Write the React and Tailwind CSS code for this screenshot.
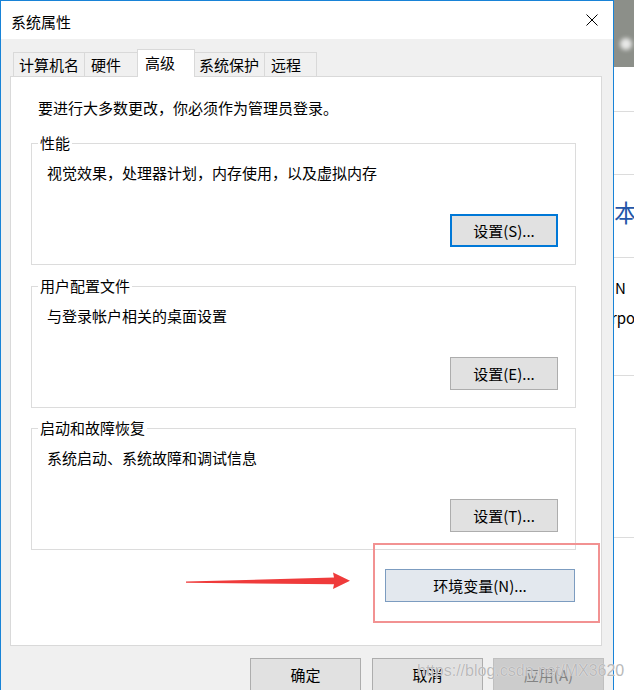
import { useState } from "react";

const groups = [
  {
    title: "性能",
    desc: "视觉效果，处理器计划，内存使用，以及虚拟内存",
    btn: "设置(S)...",
    focus: true,
  },
  { title: "用户配置文件", desc: "与登录帐户相关的桌面设置", btn: "设置(E)..." },
  { title: "启动和故障恢复", desc: "系统启动、系统故障和调试信息", btn: "设置(T)..." },
];

const tabs = [
  { label: "计算机名", w: "w-[72px]", pl: "pl-[5px]" },
  { label: "硬件", w: "w-[54px]", pl: "pl-[6px]" },
  { label: "高级", w: "w-[58px]", pl: "pl-[7px]" },
  { label: "系统保护", w: "w-[71px]", pl: "pl-[4px]" },
  { label: "远程", w: "w-[53px]", pl: "pl-[6px]" },
];

const GroupBox = ({ title, desc, btn, focus, className = "" }) => (
  <fieldset
    className={`w-[545px] ml-[20px] px-[6px] pb-[17px] border border-[#dcdcdc] ${className}`}
  >
    <legend className="px-[2px] leading-[20px]">{title}</legend>
    <p className="mt-[10px] pl-[9px] leading-[20px]">{desc}</p>
    <div className="flex justify-end mt-[31px] pr-[11px]">
      <div
        className={`w-[108px] h-[33px] flex items-center justify-center bg-[#e1e1e1] ${
          focus ? "border-2 border-[#0078d7]" : "border border-[#adadad]"
        }`}
      >
        {btn}
      </div>
    </div>
  </fieldset>
);

const App = () => {
  const [tab] = useState("高级");

  return (
    <div className="relative flex w-[634px] h-[690px] overflow-hidden bg-white text-black text-[15px] leading-[20px] font-['Noto_Sans_CJK_SC',sans-serif]">
      {/* dialog window */}
      <div className="w-[614px] shrink-0 flex flex-col border-x border-t border-[#1883d7] bg-[#f0f0f0]">
        <div className="h-[38px] shrink-0 flex items-center justify-between bg-white">
          <span className="pl-[10px] mt-[3px]">系统属性</span>
          <svg width="12" height="12" viewBox="0 0 12 12" className="mr-[15px]">
            <path d="M0.5 0.5 L11.5 11.5 M11.5 0.5 L0.5 11.5" stroke="#000" strokeWidth="1" />
          </svg>
        </div>

        {/* tabs */}
        <div className="flex items-end h-[27px] mt-[10px] pl-[12px]">
          {tabs.map((t, i) => {
            const active = t.label === tab;
            return (
              <div
                key={t.label}
                className={`${t.w} ${t.pl} flex items-center border border-b-0 border-[#d9d9d9] ${
                  i > 0 ? "-ml-px" : ""
                } ${
                  active
                    ? "h-[28px] -mb-px relative z-10 bg-white pb-[2px]"
                    : "h-[24px] bg-[#f0f0f0]"
                }`}
              >
                {t.label}
              </div>
            );
          })}
        </div>

        {/* panel */}
        <div className="w-[592px] h-[570px] shrink-0 ml-[9px] border border-[#d9d9d9] bg-white flex flex-col">
          <p className="pt-[21px] pl-[27px] leading-[20px]">
            要进行大多数更改，你必须作为管理员登录。
          </p>
          <GroupBox {...groups[0]} className="mt-[15px]" />
          <GroupBox {...groups[1]} className="mt-[11px]" />
          <GroupBox {...groups[2]} className="mt-[10px]" />
          <div className="flex justify-end mt-[19px] pr-[26px]">
            <div className="w-[190px] h-[33px] flex items-center justify-center bg-[#e3e8ee] border border-[#7c9cc0]">
              环境变量(N)...
            </div>
          </div>
        </div>

        {/* footer buttons */}
        <div className="flex justify-end gap-[11px] mt-[12px] pr-[9px]">
          <div className="w-[111px] h-[34px] flex items-center justify-center bg-[#e1e1e1] border border-[#adadad]">
            确定
          </div>
          <div className="w-[111px] h-[34px] flex items-center justify-center bg-[#e1e1e1] border border-[#adadad]">
            取消
          </div>
          <div className="w-[111px] h-[34px] -ml-px flex items-center justify-center bg-[#cccccc] border border-[#bfbfbf] text-[#838383]">
            应用(A)
          </div>
        </div>
      </div>

      {/* desktop behind the dialog */}
      <div className="flex-1 flex flex-col whitespace-nowrap overflow-hidden">
        <div className="h-[67px] shrink-0 bg-[#8c8f89] flex flex-col items-end pr-[2px] pt-[38px]">
          <div className="w-[12px] h-[12px] rounded-full bg-white/80 blur-[2px]" />
        </div>
        <div className="h-[45px] shrink-0 border-b border-[#dcdcdc]" />
        <div className="h-[63px] shrink-0 border-b border-[#dcdcdc]" />
        <div className="h-[83px] shrink-0 border-b border-[#dcdcdc] pt-[22px] text-[24px] leading-[30px] text-[#2456a8]">
          本个
        </div>
        <div className="h-[118px] shrink-0 border-b border-[#dcdcdc] pt-[20px]">
          <div className="pl-[1px]">N</div>
          <div className="mt-[10px] -ml-[3px]">rpo</div>
        </div>
        <div className="h-[162px] shrink-0 border-b border-[#dcdcdc]" />
      </div>

      {/* annotations drawn over the screenshot */}
      <div className="absolute left-[373px] top-[543px] w-[227px] h-[80px] border-2 border-[#f29292]" />
      <svg
        className="absolute left-0 top-0 pointer-events-none"
        width="634"
        height="690"
        viewBox="0 0 634 690"
      >
        <polygon
          points="186,581.6 334,577.6 333,572.5 350,580.8 333,589 334,584.2 186,582.8"
          fill="#ef3b3b"
        />
      </svg>
      <span className="absolute left-[417px] top-[661px] text-[16px] leading-[20px] font-['Liberation_Sans',sans-serif] text-[#b9b9b9] [text-shadow:0_0_1px_#ffffff] pointer-events-none">
        https://blog.csdn.net/MX3620
      </span>
    </div>
  );
};

export default App;
